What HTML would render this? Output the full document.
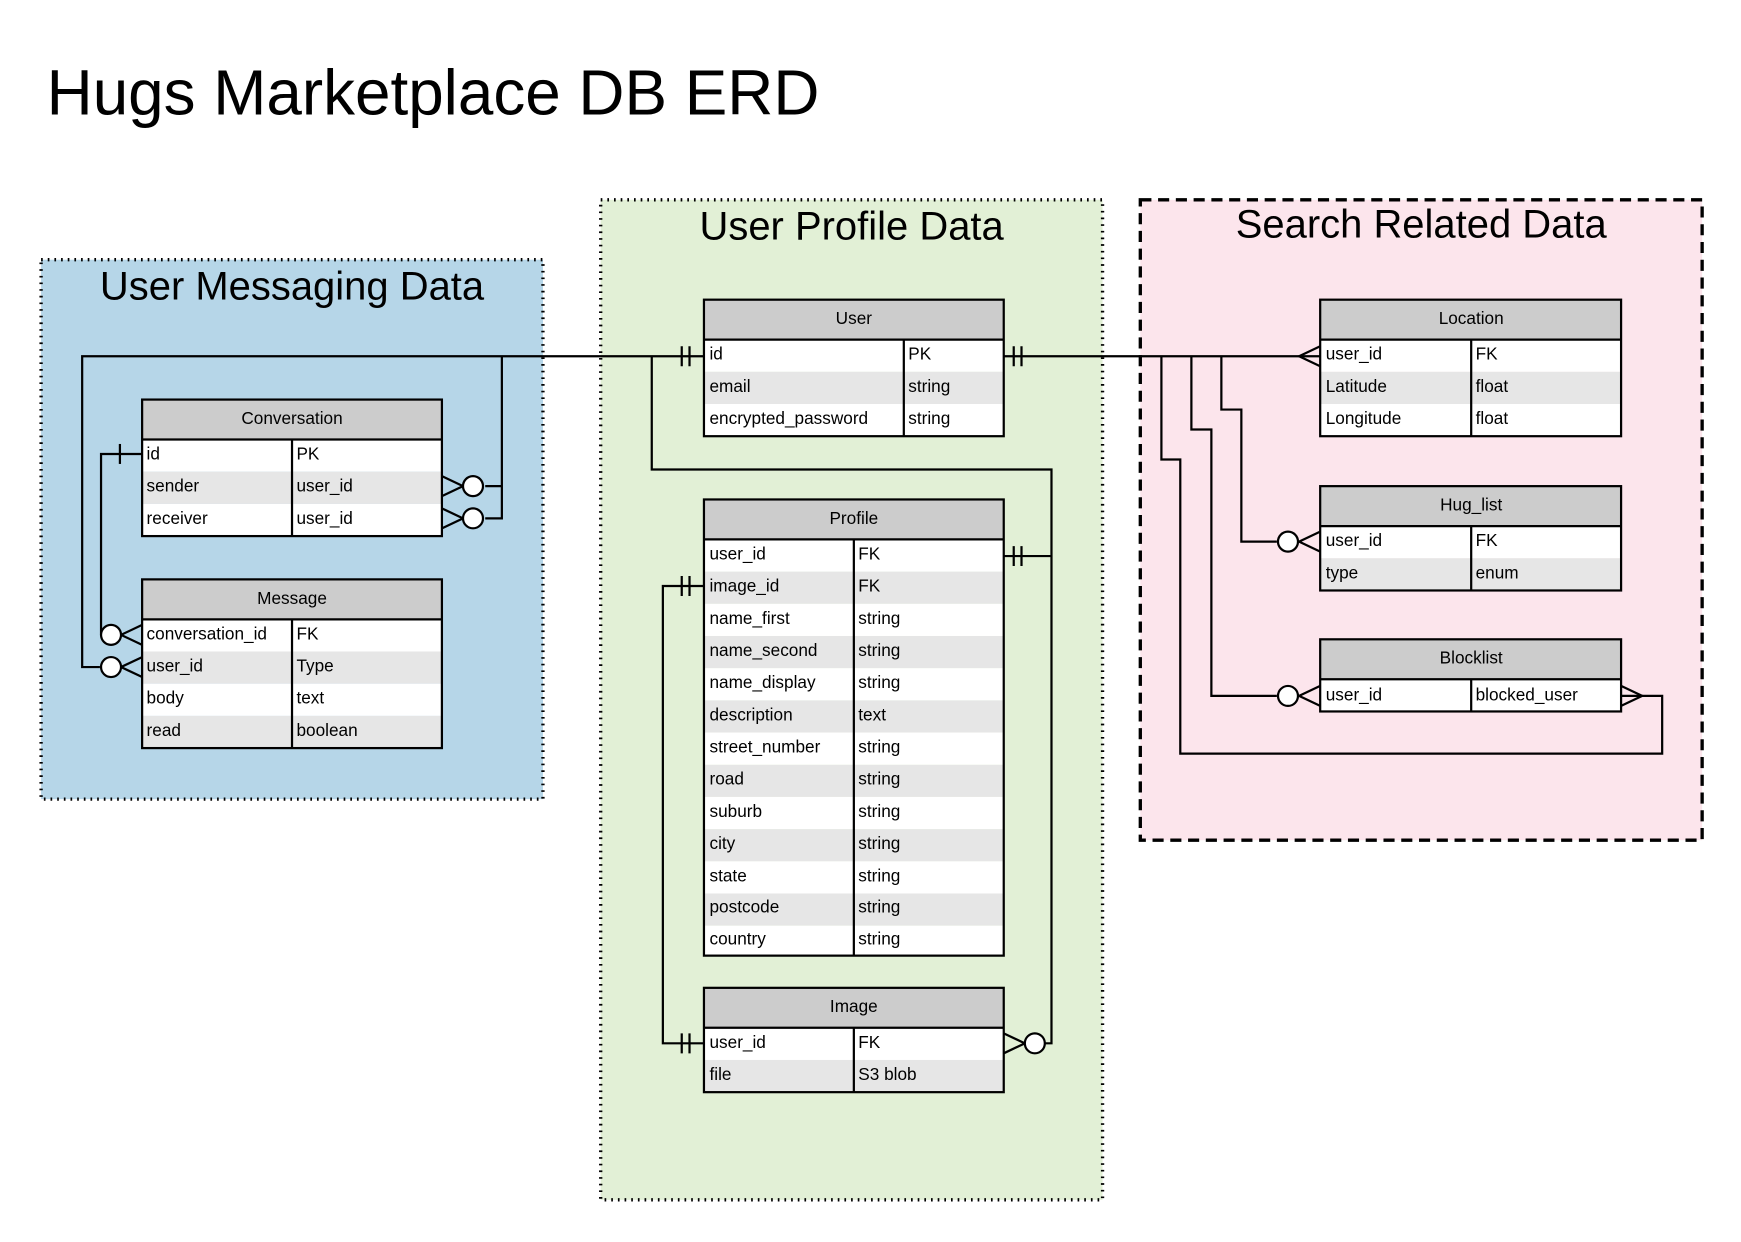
<!DOCTYPE html>
<html><head><meta charset="utf-8"><style>
html,body{margin:0;padding:0;background:#fff;}
svg{display:block;}
text{font-family:"Liberation Sans",sans-serif;}
</style></head><body>
<svg width="1741" height="1242" viewBox="0 0 1568 1119" preserveAspectRatio="none" xmlns="http://www.w3.org/2000/svg">
<rect width="1568" height="1119" fill="#fff"/>
<text x="42" y="103" font-size="58" textLength="696" lengthAdjust="spacingAndGlyphs" fill="#000">Hugs Marketplace DB ERD</text>

<!-- groups -->
<rect x="37" y="234" width="452" height="486" fill="#b6d6e8" stroke="#000" stroke-width="3" stroke-dasharray="1.5 4.5"/>
<rect x="541" y="180" width="452" height="901" fill="#e2f0d6" stroke="#000" stroke-width="3" stroke-dasharray="1.5 4.5"/>
<rect x="1027" y="180" width="506" height="577" fill="#fce5ec" stroke="#000" stroke-width="3" stroke-dasharray="10 6"/>
<text x="263" y="270" font-size="36" text-anchor="middle">User Messaging Data</text>
<text x="767" y="216" font-size="36" text-anchor="middle">User Profile Data</text>
<text x="1280" y="214" font-size="36" text-anchor="middle">Search Related Data</text>

<g font-size="15.5" fill="#000">
<!-- User -->
<rect x="634" y="270" width="270" height="36" fill="#ccc"/>
<rect x="634" y="306" width="270" height="29" fill="#fff"/>
<rect x="634" y="335" width="270" height="29" fill="#e6e6e6"/>
<rect x="634" y="364" width="270" height="29" fill="#fff"/>
<rect x="634" y="270" width="270" height="123" fill="none" stroke="#000" stroke-width="2"/>
<line x1="634" y1="306" x2="904" y2="306" stroke="#000" stroke-width="2"/>
<line x1="814" y1="306" x2="814" y2="393" stroke="#000" stroke-width="2"/>
<text x="769" y="292" text-anchor="middle">User</text>
<text x="639" y="324">id</text><text x="818" y="324">PK</text>
<text x="639" y="353">email</text><text x="818" y="353">string</text>
<text x="639" y="382">encrypted_password</text><text x="818" y="382">string</text>

<!-- Conversation -->
<rect x="128" y="360" width="270" height="36" fill="#ccc"/>
<rect x="128" y="396" width="270" height="29" fill="#fff"/>
<rect x="128" y="425" width="270" height="29" fill="#e6e6e6"/>
<rect x="128" y="454" width="270" height="29" fill="#fff"/>
<rect x="128" y="360" width="270" height="123" fill="none" stroke="#000" stroke-width="2"/>
<line x1="128" y1="396" x2="398" y2="396" stroke="#000" stroke-width="2"/>
<line x1="263" y1="396" x2="263" y2="483" stroke="#000" stroke-width="2"/>
<text x="263" y="382" text-anchor="middle">Conversation</text>
<text x="132" y="414">id</text><text x="267" y="414">PK</text>
<text x="132" y="443">sender</text><text x="267" y="443">user_id</text>
<text x="132" y="472">receiver</text><text x="267" y="472">user_id</text>

<!-- Message -->
<rect x="128" y="522" width="270" height="36" fill="#ccc"/>
<rect x="128" y="558" width="270" height="29" fill="#fff"/>
<rect x="128" y="587" width="270" height="29" fill="#e6e6e6"/>
<rect x="128" y="616" width="270" height="29" fill="#fff"/>
<rect x="128" y="645" width="270" height="29" fill="#e6e6e6"/>
<rect x="128" y="522" width="270" height="152" fill="none" stroke="#000" stroke-width="2"/>
<line x1="128" y1="558" x2="398" y2="558" stroke="#000" stroke-width="2"/>
<line x1="263" y1="558" x2="263" y2="674" stroke="#000" stroke-width="2"/>
<text x="263" y="544" text-anchor="middle">Message</text>
<text x="132" y="576">conversation_id</text><text x="267" y="576">FK</text>
<text x="132" y="605">user_id</text><text x="267" y="605">Type</text>
<text x="132" y="634">body</text><text x="267" y="634">text</text>
<text x="132" y="663">read</text><text x="267" y="663">boolean</text>

<!-- Profile -->
<rect x="634" y="450" width="270" height="36" fill="#ccc"/>
<g fill="#e6e6e6">
<rect x="634" y="515" width="270" height="29"/><rect x="634" y="573" width="270" height="29"/>
<rect x="634" y="631" width="270" height="29"/><rect x="634" y="689" width="270" height="29"/>
<rect x="634" y="747" width="270" height="29"/><rect x="634" y="805" width="270" height="29"/>
</g>
<g fill="#fff">
<rect x="634" y="486" width="270" height="29"/><rect x="634" y="544" width="270" height="29"/>
<rect x="634" y="602" width="270" height="29"/><rect x="634" y="660" width="270" height="29"/>
<rect x="634" y="718" width="270" height="29"/><rect x="634" y="776" width="270" height="29"/>
<rect x="634" y="834" width="270" height="27"/>
</g>
<rect x="634" y="450" width="270" height="411" fill="none" stroke="#000" stroke-width="2"/>
<line x1="634" y1="486" x2="904" y2="486" stroke="#000" stroke-width="2"/>
<line x1="769" y1="486" x2="769" y2="861" stroke="#000" stroke-width="2"/>
<text x="769" y="472" text-anchor="middle">Profile</text>
<text x="639" y="504">user_id</text><text x="773" y="504">FK</text>
<text x="639" y="533">image_id</text><text x="773" y="533">FK</text>
<text x="639" y="562">name_first</text><text x="773" y="562">string</text>
<text x="639" y="591">name_second</text><text x="773" y="591">string</text>
<text x="639" y="620">name_display</text><text x="773" y="620">string</text>
<text x="639" y="649">description</text><text x="773" y="649">text</text>
<text x="639" y="678">street_number</text><text x="773" y="678">string</text>
<text x="639" y="707">road</text><text x="773" y="707">string</text>
<text x="639" y="736">suburb</text><text x="773" y="736">string</text>
<text x="639" y="765">city</text><text x="773" y="765">string</text>
<text x="639" y="794">state</text><text x="773" y="794">string</text>
<text x="639" y="822">postcode</text><text x="773" y="822">string</text>
<text x="639" y="851">country</text><text x="773" y="851">string</text>

<!-- Image -->
<rect x="634" y="890" width="270" height="36" fill="#ccc"/>
<rect x="634" y="926" width="270" height="29" fill="#fff"/>
<rect x="634" y="955" width="270" height="29" fill="#e6e6e6"/>
<rect x="634" y="890" width="270" height="94" fill="none" stroke="#000" stroke-width="2"/>
<line x1="634" y1="926" x2="904" y2="926" stroke="#000" stroke-width="2"/>
<line x1="769" y1="926" x2="769" y2="984" stroke="#000" stroke-width="2"/>
<text x="769" y="912" text-anchor="middle">Image</text>
<text x="639" y="944">user_id</text><text x="773" y="944">FK</text>
<text x="639" y="973">file</text><text x="773" y="973">S3 blob</text>

<!-- Location -->
<rect x="1189" y="270" width="271" height="36" fill="#ccc"/>
<rect x="1189" y="306" width="271" height="29" fill="#fff"/>
<rect x="1189" y="335" width="271" height="29" fill="#e6e6e6"/>
<rect x="1189" y="364" width="271" height="29" fill="#fff"/>
<rect x="1189" y="270" width="271" height="123" fill="none" stroke="#000" stroke-width="2"/>
<line x1="1189" y1="306" x2="1460" y2="306" stroke="#000" stroke-width="2"/>
<line x1="1325" y1="306" x2="1325" y2="393" stroke="#000" stroke-width="2"/>
<text x="1325" y="292" text-anchor="middle">Location</text>
<text x="1194" y="324">user_id</text><text x="1329" y="324">FK</text>
<text x="1194" y="353">Latitude</text><text x="1329" y="353">float</text>
<text x="1194" y="382">Longitude</text><text x="1329" y="382">float</text>

<!-- Hug_list -->
<rect x="1189" y="438" width="271" height="36" fill="#ccc"/>
<rect x="1189" y="474" width="271" height="29" fill="#fff"/>
<rect x="1189" y="503" width="271" height="29" fill="#e6e6e6"/>
<rect x="1189" y="438" width="271" height="94" fill="none" stroke="#000" stroke-width="2"/>
<line x1="1189" y1="474" x2="1460" y2="474" stroke="#000" stroke-width="2"/>
<line x1="1325" y1="474" x2="1325" y2="532" stroke="#000" stroke-width="2"/>
<text x="1325" y="460" text-anchor="middle">Hug_list</text>
<text x="1194" y="492">user_id</text><text x="1329" y="492">FK</text>
<text x="1194" y="521">type</text><text x="1329" y="521">enum</text>

<!-- Blocklist -->
<rect x="1189" y="576" width="271" height="36" fill="#ccc"/>
<rect x="1189" y="612" width="271" height="29" fill="#fff"/>
<rect x="1189" y="576" width="271" height="65" fill="none" stroke="#000" stroke-width="2"/>
<line x1="1189" y1="612" x2="1460" y2="612" stroke="#000" stroke-width="2"/>
<line x1="1325" y1="612" x2="1325" y2="641" stroke="#000" stroke-width="2"/>
<text x="1325" y="598" text-anchor="middle">Blocklist</text>
<text x="1194" y="631">user_id</text><text x="1329" y="631">blocked_user</text>
</g>

<!-- connectors -->
<g fill="none" stroke="#000" stroke-width="2">
<path d="M634 321 H74 V601 H90"/>
<path d="M452 321 V467 H437 M452 438 H437"/>
<path d="M128 409 H91 V572"/>
<line x1="108" y1="400" x2="108" y2="418"/>
<path d="M587 321 V423 H947 V940 H941 M947 501 H904"/>
<path d="M634 528 H597 V940 H634"/>
<path d="M904 321 H1189"/>
<path d="M1100 321 V369 H1118 V488 H1150"/>
<path d="M1073 321 V387 H1091 V627 H1150"/>
<path d="M1046 321 V414 H1063 V679 H1497 V627 H1460"/>
<!-- double ticks -->
<path d="M614 312 V330 M621 312 V330"/>
<path d="M913 312 V330 M920 312 V330"/>
<path d="M913 492 V510 M920 492 V510"/>
<path d="M614 519 V537 M621 519 V537"/>
<path d="M614 931 V949 M621 931 V949"/>
<!-- crows feet -->
<path d="M398 429 L417 438 L398 447"/>
<path d="M398 458 L417 467 L398 476"/>
<path d="M128 563 L109 572 L128 581"/>
<path d="M128 592 L109 601 L128 610"/>
<path d="M904 931 L923 940 L904 949"/>
<path d="M1189 312 L1170 321 L1189 330"/>
<path d="M1189 479 L1170 488 L1189 497"/>
<path d="M1189 618 L1170 627 L1189 636"/>
<path d="M1460 618 L1479 627 L1460 636"/>
</g>
<g fill="#fff" stroke="#000" stroke-width="2">
<circle cx="426" cy="438" r="9"/>
<circle cx="426" cy="467" r="9"/>
<circle cx="100" cy="572" r="9"/>
<circle cx="100" cy="601" r="9"/>
<circle cx="932" cy="940" r="9"/>
<circle cx="1160" cy="488" r="9"/>
<circle cx="1160" cy="627" r="9"/>
</g>
</svg>
</body></html>
